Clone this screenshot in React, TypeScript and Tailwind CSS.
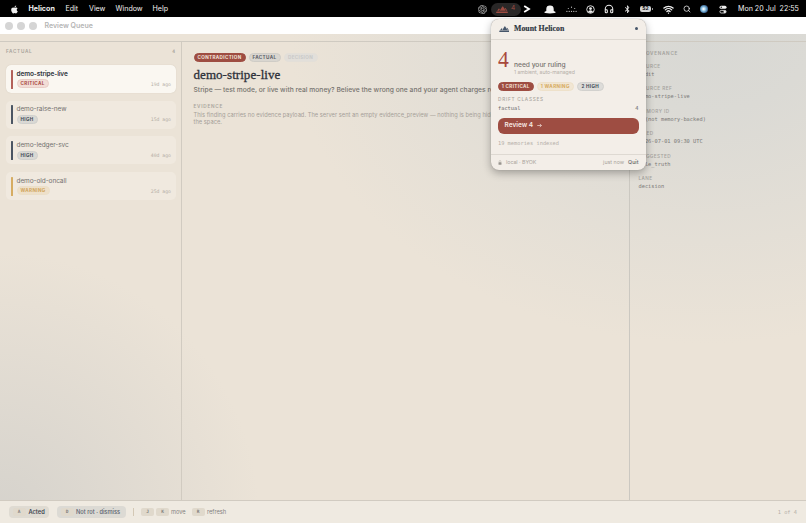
import type { FC, ReactNode } from 'react';
import { FaApple, FaBluetoothB } from 'react-icons/fa';
import { SiOpenai } from 'react-icons/si';
import { Headphones, Search, Wifi } from 'lucide-react';
import { twMerge } from 'tailwind-merge';

const sans = "font-['Inter','Liberation_Sans',sans-serif]";
const serif = "font-['Liberation_Serif',serif]";
const mono = "font-['DejaVu_Sans_Mono','Liberation_Mono',monospace]";

type Severity = 'critical' | 'high' | 'warning';

const findings: { name: string; severity: Severity; age: string }[] = [
  { name: 'demo-stripe-live', severity: 'critical', age: '19d ago' },
  { name: 'demo-raise-new', severity: 'high', age: '15d ago' },
  { name: 'demo-ledger-svc', severity: 'high', age: '40d ago' },
  { name: 'demo-old-oncall', severity: 'warning', age: '25d ago' }
];

const provenance = [
  ['Source', 'audit'],
  ['Source ref', 'demo-stripe-live'],
  ['Memory ID', '— (not memory-backed)'],
  ['Filed', '2026-07-01 09:30 UTC'],
  ['Suggested', 'sole_truth'],
  ['Lane', 'decision']
];

const barColor: Record<Severity, string> = {
  critical: 'bg-[#b4615a]',
  high: 'bg-[#4b5563]',
  warning: 'bg-[#d6ac62]'
};

const pillColor: Record<Severity, string> = {
  critical: 'border-[#e9cec7] bg-[#f2ddd6] text-[#a9483f]',
  high: 'border-[#d0d0cd] bg-[#d9d8d4] text-[#434b57]',
  warning: 'border-[#ebdfc9] bg-[#eee0c9] text-[#d0a55c]'
};

const Mountains: FC<{ className?: string }> = ({ className }) => (
  <svg viewBox="0 0 22 13" className={className} fill="currentColor">
    <path d="M6.6 9 11.400 1.200q.9-1.300 1.800 0L18 9z" />
    <path d="M15.800 4.400q1.100-1.300 2 0L21 9h-2.200z" />
    <path d="M2 9l2.600-3.800q.8-1 1.600 0l.8 1.200L5.500 9z" />
    <path d="M.8 10h20.400l.8 2.800H0z" />
  </svg>
);

const Pill: FC<{ className?: string; children: ReactNode }> = ({
  className,
  children
}) => (
  <span
    className={twMerge(
      'flex h-[9px] shrink-0 items-center justify-center rounded-full border text-[4.6px] leading-[7px] font-bold tracking-[0.360px] whitespace-nowrap uppercase',
      className
    )}
  >
    {children}
  </span>
);

const Key: FC<{ children: ReactNode }> = ({ children }) => (
  <span
    className={`${mono} flex h-2 w-[13px] items-center justify-center rounded-[2px] bg-[#e0d9cc] text-[4.500px] font-bold text-[#81807d]`}
  >
    {children}
  </span>
);

const MenuBar: FC = () => (
  <header className="flex h-[17px] shrink-0 items-center bg-black pt-px text-[7.100px] text-[#f0f0f0]">
    <FaApple className="ml-[10px] size-[9px]" />
    <span className="ml-[9.500px] w-[37px] font-bold">Helicon</span>
    <span className="w-[23.500px]">Edit</span>
    <span className="w-[26.500px]">View</span>
    <span className="w-[37px]">Window</span>
    <span>Help</span>
    <div className="ml-auto flex items-center">
      <SiOpenai className="size-[9px] text-[#bdbdbd]" />
      <div className="ml-[3.500px] flex h-[13px] w-[30px] items-center justify-center gap-[3px] rounded-full bg-[#292727] text-[6.500px] text-[#9c4a40]">
        <Mountains className="h-[7px] w-[12px]" />
        <span>4</span>
      </div>
      <svg viewBox="0 0 8 8" className="ml-[2px] size-[8px]">
        <path d="M1.200 1 6 4 1.200 7" fill="none" stroke="#fff" strokeWidth="1.800" />
      </svg>
      <svg viewBox="0 0 12 9" className="ml-[13px] h-[9px] w-[12px]" fill="#f2f2f2">
        <path d="M2.300 6V4a3.700 3.400 0 0 1 7.400 0v2l1.600.8q.8.900-.6 1.200-4.700.8-9.400 0-1.400-.3-.6-1.200z" />
      </svg>
      <svg viewBox="0 0 12 8" className="ml-[10.500px] h-[8px] w-[11px]" fill="#cfcfcf">
        <circle cx="1" cy="6.500" r=".7" />
        <circle cx="3.500" cy="6.500" r=".7" />
        <circle cx="6" cy="6.500" r=".7" />
        <circle cx="8.500" cy="6.500" r=".7" />
        <circle cx="11" cy="6.500" r=".7" />
        <circle cx="2.500" cy="3.500" r=".6" />
        <circle cx="6" cy="2" r=".6" />
        <circle cx="9.500" cy="3.500" r=".6" />
      </svg>
      <svg viewBox="0 0 10 10" className="ml-[8.500px] size-[9px]">
        <circle cx="5" cy="5" r="4.200" fill="none" stroke="#eee" strokeWidth="1" />
        <circle cx="5" cy="4" r="1.600" fill="#eee" />
        <path d="M2.300 7.600a2.800 2.300 0 0 1 5.400 0A4 4 0 0 1 2.300 7.600z" fill="#eee" />
      </svg>
      <Headphones className="ml-[9px] size-[10px]" strokeWidth={2.5} />
      <FaBluetoothB className="ml-[9px] size-[8.500px]" />
      <span className="ml-[9px] flex h-[6px] w-[11px] items-center justify-center rounded-[2px] bg-[#d5d5d5] text-[5px] font-bold text-black">
        52
      </span>
      <span className="ml-[0.500px] h-[2px] w-px bg-[#999]" />
      <Wifi className="ml-[10.500px] size-[11px]" strokeWidth={2.8} />
      <Search className="ml-[9px] size-[8px]" strokeWidth={2.3} />
      <span className="ml-[8.500px] size-[8px] rounded-full bg-[radial-gradient(circle_at_45%_50%,#ffffff_5%,#8fc4e4_35%,#3e6f9c_65%,#7c3b64_100%)]" />
      <svg viewBox="0 0 8 9" className="ml-[11px] h-[9px] w-[8px]">
        <rect x=".5" y=".8" width="7" height="3" rx="1.500" fill="#eee" />
        <circle cx="2.300" cy="2.300" r=".8" fill="#222" />
        <rect x=".9" y="5.400" width="6.200" height="2.600" rx="1.300" fill="none" stroke="#eee" strokeWidth=".8" />
        <circle cx="5.700" cy="6.700" r="1.200" fill="#eee" />
      </svg>
      <span className="mr-[8px] ml-[11.500px] w-[60px] whitespace-pre">
        Mon 20 Jul  22:55
      </span>
    </div>
  </header>
);

const QueueList: FC = () => (
  <aside className="w-[182px] shrink-0 border-r border-[#d1cbc1] px-[6px] pt-[7px]">
    <div className="flex h-[6px] items-center justify-between text-[4.700px] font-semibold tracking-[0.700px] text-[#aaa59d]">
      <span>FACTUAL</span>
      <span className={`${mono} tracking-normal`}>4</span>
    </div>
    <ul className="mt-[10px] flex flex-col gap-[7.700px]">
      {findings.map((finding, index) => (
        <li
          key={finding.name}
          className={twMerge(
            'flex h-[28px] w-[169.500px] items-center rounded-[5px] bg-[#f0e9df] px-[4.500px]',
            index === 0 && 'bg-[#faf7f1] shadow-[0_0_1px_#c9bfae]'
          )}
        >
          <span
            className={twMerge(
              'h-[19px] w-[2px] rounded-[0.500px]',
              barColor[finding.severity]
            )}
          />
          <div className="ml-[4px] flex flex-1 flex-col">
            <span
              className={twMerge(
                'h-[9px] text-[6.500px] leading-[8px] tracking-[-0.080px] text-[#73716f]',
                index === 0 && 'font-semibold tracking-[-0.100px] text-[#30343b]'
              )}
            >
              {finding.name}
            </span>
            <div className="flex items-center justify-between pt-[0.500px]">
              <Pill className={twMerge('px-[3px]', pillColor[finding.severity])}>
                {finding.severity}
              </Pill>
              <span className={`${mono} pt-px text-[4.800px] text-[#b5afa6]`}>
                {finding.age}
              </span>
            </div>
          </div>
        </li>
      ))}
    </ul>
  </aside>
);

const FindingDetail: FC = () => (
  <main className="min-w-0 flex-1 overflow-hidden pt-[11px] pl-[11.500px] whitespace-nowrap">
    <div className="flex gap-[3px]">
      <Pill className="w-[52px] border-[#9e4d42] bg-[#9e4d42] text-[#f3e4dc]">
        Contradiction
      </Pill>
      <Pill className="w-[32px] border-[#cfccc6] bg-[#d9d6d0] text-[#5c6067]">
        Factual
      </Pill>
      <Pill className="w-[34px] border-[#e3dfd8] bg-[#e2dfda] text-[#c9c9c8]">
        Decision
      </Pill>
    </div>
    <h1
      className={`${serif} mt-[5px] h-[15px] text-[13px] leading-[16px] font-medium tracking-[0.060px] text-[#2d3139] [-webkit-text-stroke:0.300px_#2d3139]`}
    >
      demo-stripe-live
    </h1>
    <p className="mt-[3.500px] text-[6.700px] leading-[9px] font-medium tracking-[0.020px] text-[#76736f]">
      Stripe — test mode, or live with real money? Believe the wrong one and your
      agent charges real cards.
    </p>
    <h2 className="mt-[8px] text-[4.700px] leading-[6px] font-semibold tracking-[0.750px] text-[#aaa59d]">
      EVIDENCE
    </h2>
    <p className="mt-[2px] text-[5.700px] leading-[7px] tracking-[0.040px] text-[#a5a098]">
      This finding carries no evidence payload. The server sent an empty
      evidence_preview — nothing is being hidden to fill
      <br />
      the space.
    </p>
  </main>
);

const Provenance: FC = () => (
  <aside className="w-[177px] shrink-0 border-l border-[#cbc8c1] pt-[7.500px] pl-[8.500px]">
    <h2 className="text-[4.700px] leading-[6px] font-semibold tracking-[0.700px] text-[#a3a19c]">
      PROVENANCE
    </h2>
    <dl className="mt-[7.500px] flex flex-col gap-[7.400px]">
      {provenance.map(([label, value]) => (
        <div key={label} className="h-[15px]">
          <dt className="text-[4.700px] leading-[6px] font-medium tracking-[0.450px] text-[#a3a19c] uppercase">
            {label}
          </dt>
          <dd
            className={`${mono} mt-[2px] text-[5.330px] leading-[7px] text-[#7a7977]`}
          >
            {value}
          </dd>
        </div>
      ))}
    </dl>
  </aside>
);

const ActionBar: FC = () => (
  <footer className="flex h-[23px] shrink-0 items-center border-t border-[#d1cbc1] bg-[#efeae1] px-[9px] text-[5.700px] text-[#83817e]">
    <button
      type="button"
      className="flex h-[12px] w-[40px] items-center gap-[3px] rounded-[4px] bg-[#dfdbd2] pl-[3.500px] font-semibold text-[#3c444f]"
    >
      <Key>A</Key>
      Acted
    </button>
    <button
      type="button"
      className="ml-[8px] flex h-[12px] w-[69px] items-center gap-[2.500px] rounded-[4px] bg-[#dcdad4] pl-[3.500px] font-medium text-[#5b626c]"
    >
      <Key>D</Key>
      Not rot · dismiss
    </button>
    <span className="mx-[7px] h-[8px] w-px bg-[#d3c8b5]" />
    <Key>J</Key>
    <span className="w-[2px]" />
    <Key>K</Key>
    <span className="ml-[2px] w-[20.500px]">move</span>
    <Key>R</Key>
    <span className="ml-[2.500px]">refresh</span>
    <span className={`${mono} ml-auto pt-[2px] text-[5.330px] text-[#b5b0a8]`}>
      1 of 4
    </span>
  </footer>
);

const StatusPopover: FC = () => (
  <section className="absolute top-[18.500px] left-[490.500px] flex h-[151.500px] w-[155.500px] flex-col rounded-[8px] bg-[#f3eee8] shadow-[0_0_1px_#8f8b86,0_3px_9px_rgba(0,0,0,0.300)]">
    <div className="flex h-[21.500px] items-center border-b border-[#ded9d2] px-[8px]">
      <Mountains className="h-[6px] w-[10.500px] text-[#46566a]" />
      <span
        className={`${serif} ml-[5px] text-[7.800px] font-bold tracking-[0.020px] text-[#2c3540] [-webkit-text-stroke:0.150px_#2c3540]`}
      >
        Mount Helicon
      </span>
      <span className="ml-auto size-[3px] rounded-full bg-[#46566a]" />
    </div>
    <div className="flex-1 px-[7.500px] pt-[10px]">
      <div className="flex h-[27px]">
        <span
          className={`${serif} w-[16px] origin-left scale-x-90 text-[24px] leading-[19px] text-[#a8483c]`}
        >
          4
        </span>
        <div className="pt-[10.500px] whitespace-nowrap">
          <div className="text-[6.650px] leading-[8px] font-medium text-[#77736f]">
            need your ruling
          </div>
          <div className="text-[5.200px] leading-[6px] tracking-[-0.060px] text-[#b5afa8]">
            1 ambient, auto-managed
          </div>
        </div>
      </div>
      <div className="mt-[4.500px] flex gap-[3px]">
        <Pill className="w-[35.500px] border-[#9e4d42] bg-[#9e4d42] text-[#f3e4dc]">
          1 Critical
        </Pill>
        <Pill className="w-[37.500px] border-[#eee1ca] bg-[#f1e6d3] text-[#d6aa5d]">
          1 Warning
        </Pill>
        <Pill className="w-[26.500px] border-[#d2d1ce] bg-[#dddcd9] text-[#434b57]">
          2 High
        </Pill>
      </div>
      <div className="mt-[5.500px] text-[4.700px] leading-[6px] font-medium tracking-[0.750px] text-[#aaa59d]">
        DRIFT CLASSES
      </div>
      <div
        className={`${mono} mt-[3px] flex justify-between text-[5.330px] leading-[7px] text-[#6a6a6b]`}
      >
        <span>factual</span>
        <span>4</span>
      </div>
      <button
        type="button"
        className="mt-[6px] flex h-[15.500px] w-full items-center gap-[4px] rounded-[6px] bg-[#9e4d42] pl-[6.500px] text-[6.500px] font-semibold text-[#f6e9e3]"
      >
        Review 4
        <svg viewBox="0 0 6 6" className="size-[5px]">
          <path d="M.3 3h5M3.300 1l2 2-2 2" fill="none" stroke="#f6e9e3" strokeWidth=".8" />
        </svg>
      </button>
      <div
        className={`${mono} mt-[6.500px] text-[5.330px] leading-[7px] text-[#b5afa8]`}
      >
        19 memories indexed
      </div>
    </div>
    <div className="flex h-[16px] shrink-0 items-center border-t border-[#ded9d2] px-[7.500px] text-[5.300px] text-[#aaa59d]">
      <svg viewBox="0 0 5 7" className="h-[5px] w-[4px]">
        <rect x=".4" y="3" width="4.200" height="3.700" rx=".8" fill="#99958f" />
        <path d="M1.300 3V1.800a1.200 1.200 0 0 1 2.400 0V3" fill="none" stroke="#aaa59d" strokeWidth=".6" />
      </svg>
      <span className="ml-[4px] tracking-[-0.040px]">local · BYOK</span>
      <span className="ml-auto">just now</span>
      <span className="ml-[4px] font-medium text-[#66686b]">Quit</span>
    </div>
  </section>
);

const App: FC = () => (
  <div className={`${sans} relative flex h-[523px] w-[806px] flex-col overflow-hidden`}>
    <MenuBar />
    <div className="flex h-[17px] shrink-0 items-center bg-white pl-[4.500px]">
      <div className="flex gap-[4px]">
        <span className="size-[8px] rounded-full bg-[#d5d5d5]" />
        <span className="size-[8px] rounded-full bg-[#d5d5d5]" />
        <span className="size-[8px] rounded-full bg-[#d5d5d5]" />
      </div>
      <span className="ml-[8px] pt-[2px] text-[7px] font-semibold text-[#b5b5b5]">
        Review Queue
      </span>
    </div>
    <div className="flex min-h-0 flex-1 flex-col bg-[#ebe3d7] bg-[radial-gradient(ellipse_420px_310px_at_88%_0%,#d8d8d4_0%,#dbdad5_25%,transparent_100%),radial-gradient(ellipse_260px_270px_at_0%_100%,#d5d2cc_0%,transparent_100%)]">
      <div className="h-[8px] shrink-0 border-b border-[#cfcac1]" />
      <div className="flex min-h-0 flex-1">
        <QueueList />
        <FindingDetail />
        <Provenance />
      </div>
      <ActionBar />
    </div>
    <StatusPopover />
  </div>
);

export default App;
